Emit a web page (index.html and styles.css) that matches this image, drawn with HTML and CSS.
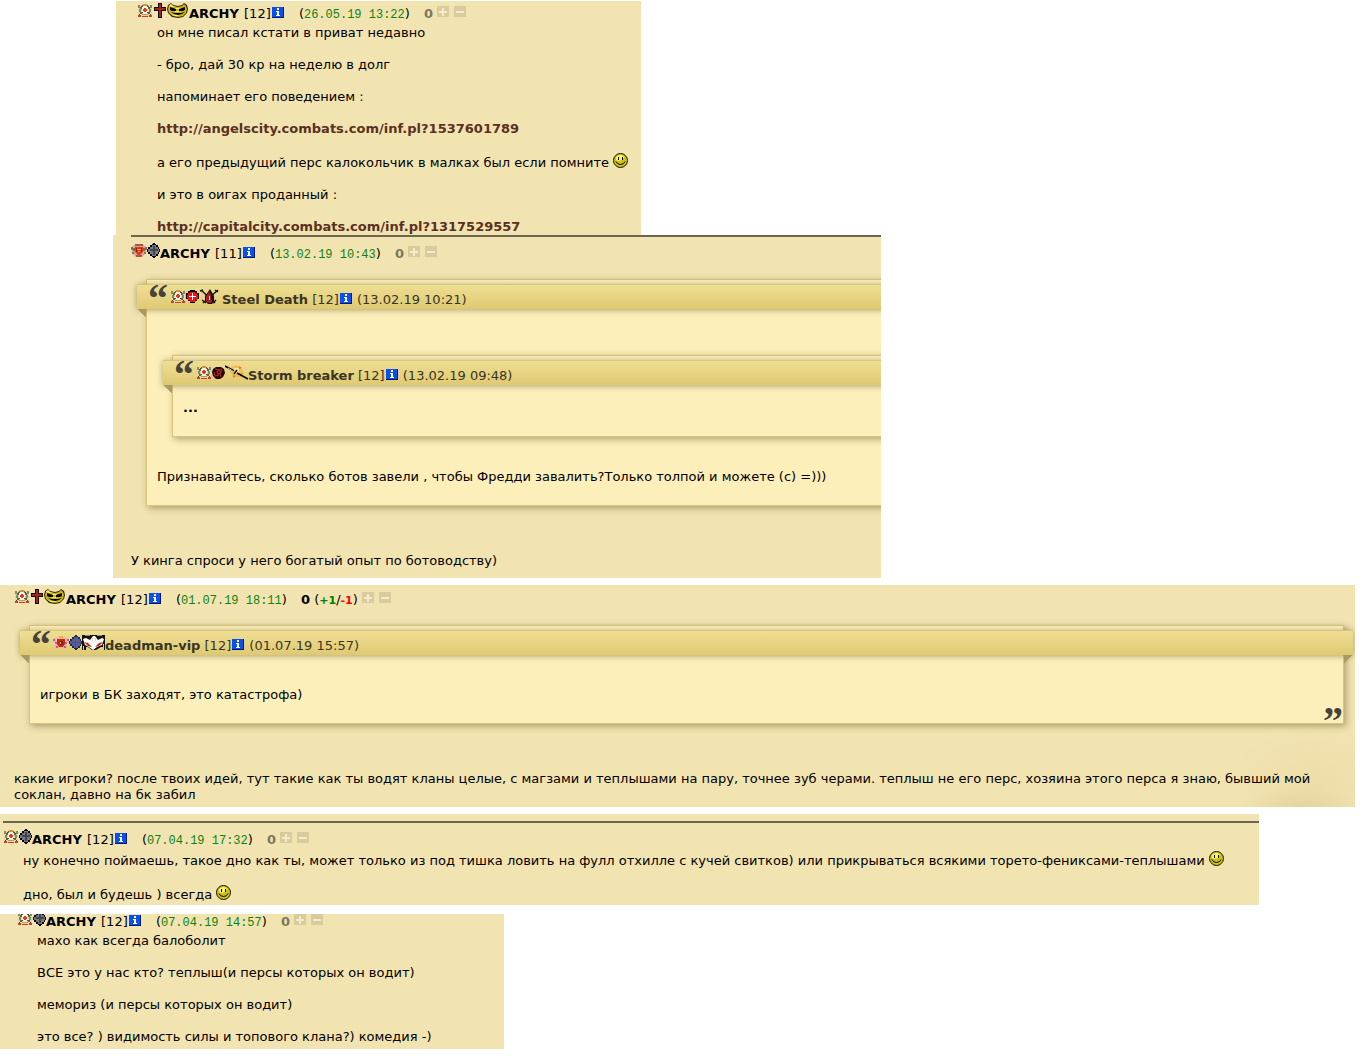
FILE: index.html
```html
<!DOCTYPE html>
<html lang="ru">
<head>
<meta charset="utf-8">
<title>ARCHY</title>
<link rel="stylesheet" href="styles.css">
</head>
<body>

<svg class="sprites" aria-hidden="true">
  <symbol id="crest" viewBox="0 0 16 15">
    <path fill="#e3d5ae" d="M1 2h4V1h6v1h4v12H1z"/>
    <path fill="#7b8f62" d="M1 2h2v3H1zM13 2h2v3h-2zM2 6h2v3H2zM12 6h2v3h-2z"/>
    <path fill="#56693a" d="M3 4h2v2H3zM11 4h2v2h-2zM3 9h2v2H3zM11 9h2v2h-2z"/>
    <path fill="#c79a3c" d="M6 1h4v2H6zM5 11h6v1H5z"/>
    <path fill="#c4402e" d="M5 2h1v2H5zM10 2h1v2h-1zM1 12h3v2H1zM12 12h3v2h-3zM5 13h6v1H5z"/>
    <path fill="#f9f3e4" d="M6 3h4v1h1v5l-2 2H7L5 9V4h1z"/>
    <path fill="#e5371f" d="M7 5h2v1h1v2H9v1H7V8H6V6h1z"/>
    <path fill="#5d4422" d="M4 3h1v1H4zM11 3h1v1h-1zM5 9h1v1H5zM10 9h1v1h-1zM2 11h1v1H2zM13 11h1v1h-1z"/>
  </symbol>
  <symbol id="crest-red" viewBox="0 0 16 15">
    <path fill="#c3ae98" d="M1 4l4-3h6l4 3v6l-4 4H5l-4-4z"/>
    <path fill="#7d7466" d="M0 4h2v3H0zM14 4h2v3h-2zM1 9h2v2H1zM13 9h2v2h-2z"/>
    <path fill="#b5513f" d="M4 1h8v2H4zM2 5h2v3H2zM12 5h2v3h-2zM5 12h6v2H5z"/>
    <path fill="#df3a1e" d="M4 4h8v5l-4 4-4-4z"/>
    <path fill="#f2a23a" d="M6 6h4v1H6zM7 8h2v1H7z"/>
    <path fill="#8b2016" d="M5 5h1v4H5zM10 5h1v4h-1z"/>
  </symbol>
  <symbol id="crest-pink" viewBox="0 0 16 15">
    <path fill="#eab3ae" d="M1 3h3l2-1h4l2 1h3v8l-3 2H4l-3-2z"/>
    <path fill="#c4617a" d="M0 4h2v2H0zM14 4h2v2h-2zM2 7h2v2H2zM12 7h2v2h-2zM3 11h2v2H3zM11 11h2v2h-2z"/>
    <path fill="#fae8df" d="M3 4h1v2H3zM12 4h1v2h-1zM1 8h1v2H1zM14 8h1v2h-1z"/>
    <path fill="#e01c14" d="M4 4h8v5l-2 3H6L4 9z"/>
    <path fill="#5a3214" d="M7 6h3v4H7z"/>
    <path fill="#f0b43c" d="M6 1h4v2H6zM7 7h1v2H7z"/>
  </symbol>
  <symbol id="cross" viewBox="0 0 13 15">
    <path fill="#1c0505" d="M5 0h4v4h4v4H9v7H5V8H1V4h4z"/>
    <path fill="#99281f" d="M6 1h2v4h4v2H8v7H6V7H2V5h4z"/>
  </symbol>
  <symbol id="order-gray" viewBox="0 0 13 15">
    <path fill="#000" d="M5 1h1V0h2v1h1v1h2v2h1v2h1v3h-1v2h-1v2H9v1H8v1H6v-1H5v-1H3v-2H1V9H0V6h1V4h2V2h2z"/>
    <path fill="#777a80" d="M5 2h4v2h2v2h1v3h-1v2H9v2H5v-2H3V9H1V6h2V4h2z"/>
    <path fill="#43464b" d="M6 3h2v3h3v2H8v4H6V8H3V6h3z"/>
  </symbol>
  <symbol id="order-blue" viewBox="0 0 13 15">
    <path fill="#1e2a4c" d="M5 1h1V0h2v1h1v1h2v2h1v2h1v3h-1v2h-1v2H9v1H8v1H6v-1H5v-1H3v-2H1V9H0V6h1V4h2V2h2z"/>
    <path fill="#52619b" d="M5 2h4v2h2v2h1v3h-1v2H9v2H5v-2H3V9H1V6h2V4h2z"/>
    <path fill="#7b3f68" d="M6 2h1v5h5v1H7v5H6V8H1V7h5z"/>
  </symbol>
  <symbol id="order-red" viewBox="0 0 13 15">
    <path fill="#000" d="M4 1h5v1h2v2h2v6h-2v2H9v2H4v-2H2v-2H0V4h2V2h2z"/>
    <path fill="#f01410" d="M4 3h5v1h2v2h1v3h-1v2H9v2H4v-2H2V9H1V6h1V4h2z"/>
    <path fill="#fff" d="M6 4h1v3h3v1H7v3H6V8H3V7h3z"/>
  </symbol>
  <symbol id="order-dark" viewBox="0 0 13 15">
    <path fill="#230504" d="M4 2h5l3 2 1 4-2 4-3 2H4l-3-3-1-4 1-3z"/>
    <path fill="none" stroke="#a8281a" stroke-width="1.2" d="M3 4l4 1 3-1M10 5l-2 4 1 3M7 10l-4 1-1-4M5 7l2-2 2 3-3 1z"/>
  </symbol>
  <symbol id="clan-evil" viewBox="0 0 23 15">
    <path fill="#2b2600" d="M2 2l3-2 2 2 5 1 4-1 2-2 3 2 1 4-1 4-4 4-5 1-6-1-4-4-1-4z"/>
    <path fill="#c9b414" d="M3 2l2-1 2 2 5 1 4-1 2-2 2 2 1 3-1 4-3 3-5 1-5-1-4-3-1-4z"/>
    <path fill="#f6ee66" d="M3 3l2-2 2 2 3 1-4 0zM9 5h4l2 1H9zM9 8h4v1H9zM5 11l4 1h5l-3 1H8z"/>
    <path fill="#000" d="M4 4l6 2v2H6L4 7zM19 4l-6 2v2h4l2-1zM5 9l4 1h6l4-1-3 2-4 1-4-1z"/>
  </symbol>
  <symbol id="clan-blood" viewBox="0 0 23 15">
    <path fill="none" stroke="#111" stroke-width="1.4" d="M2 1l14 13M19 1L4 14M1 2l3-1M16 1l3 2M3 11l4 3M14 14l3-3"/>
    <path fill="#111" d="M9 3l2-3 4 7v5l-2 3H9l-3-3V7z"/>
    <path fill="#a91c26" d="M10 2l3 6v4l-1 2H9l-2-2V8z"/>
    <path fill="#f3dcd8" d="M10 7h1v4h-1z"/>
    <path fill="#111" d="M12 7h2v4h-2z"/>
  </symbol>
  <symbol id="clan-sword" viewBox="0 0 23 15">
    <path fill="#f6bd50" d="M6 2l3-1 2-1 2 1 4 1v3l2 3-2 2-1 3-4-1-4 1-1-4-2-2 2-2z"/>
    <path fill="#e87c2c" d="M6 3l2 1-1 2zM14 1l3 2-3 1zM8 10l3 1-3 2zM15 9l3-1-2 3z"/>
    <path fill="#fce58c" d="M9 3h5v6H9z"/>
    <path stroke="#000" stroke-width="1.6" d="M0 1l9 5M12 8l11 6"/>
    <path stroke="#c9c2b4" d="M3 3l8 5"/>
    <path stroke="#000" stroke-width="1.4" d="M12 5l-3 4"/>
  </symbol>
  <symbol id="clan-mask" viewBox="0 0 23 15">
    <path fill="#16120f" d="M0 0h23v15h-1V9h-1v3h-2l-5 3h-4l-4-3H4v3H2v-4H1v4H0z"/>
    <path fill="#a08a68" d="M3 0h5v1H3zM15 0h5v1h-5z"/>
    <path fill="#fff" d="M1 4l3-1 4 2 3-4h2l3 4 4-2 2 1-2 6-5 2-4 3-4-3-4-2z"/>
    <path fill="#c01c1c" d="M2 7l4 1 4 4-4-1zM21 7l-4 1-4 4 4-1z"/>
    <path fill="#e8d2a0" d="M10 3h1v3h-1zM13 3h1v3h-1z"/>
  </symbol>
  <symbol id="info" viewBox="0 0 12 11">
    <path fill="#00186e" d="M0 0h12v11H0z"/>
    <path fill="#0a50f0" d="M0 0h11v10H0z"/>
    <path fill="#fff" d="M5 1h2v2H5zM4 4h3v4h1v1H4V8h1V5H4z"/>
  </symbol>
  <symbol id="plus" viewBox="0 0 12 11">
    <path fill="#d8cb9d" d="M0 0h12v11H0z"/>
    <path fill="#f5ecc9" d="M5 2h2v3h3v2H7v3H5V7H2V5h3z"/>
  </symbol>
  <symbol id="minus" viewBox="0 0 12 11">
    <path fill="#d8cb9d" d="M0 0h12v11H0z"/>
    <path fill="#f5ecc9" d="M2 5h8v2H2z"/>
  </symbol>
  <symbol id="smile" viewBox="0 0 15 15">
    <circle cx="7.500" cy="7.500" r="7" fill="#d2c010" stroke="#111"/>
    <path fill="#f8f26a" d="M3 4l3-2h3l2 2-2 3-4 1-2-1z"/>
    <path fill="#000" d="M5 4h1v3H5zM9 4h1v3H9z"/>
    <path fill="none" stroke="#000" d="M3 8.500Q4 11.500 7.500 11.500T12 8.500"/>
  </symbol>
</svg>

<div class="post first">
  <div class="head">
    <svg class="crest"><use href="#crest"/></svg><svg class="order"><use href="#cross"/></svg><svg class="clan"><use href="#clan-evil"/></svg><b class="name">ARCHY</b> [12]<a href="#" class="info" aria-label="info"><svg><use href="#info"/></svg></a>
    <span class="date">(<tt>26.05.19 13:22</tt>)</span>
    <b class="score">0</b>
    <button class="vote" aria-label="+"><svg><use href="#plus"/></svg></button><button class="vote" aria-label="-"><svg><use href="#minus"/></svg></button>
  </div>
  <div class="text">
    <p>он мне писал кстати в приват недавно</p>
    <p>- бро, дай 30 кр на неделю в долг</p>
    <p>напоминает его поведением :</p>
    <p><a href="http://angelscity.combats.com/inf.pl?1537601789">http://angelscity.combats.com/inf.pl?1537601789</a></p>
    <p>а его предыдущий перс калокольчик в малках был если помните <svg class="smile"><use href="#smile"/></svg></p>
    <p>и это в оигах проданный :</p>
    <p><a href="http://capitalcity.combats.com/inf.pl?1317529557">http://capitalcity.combats.com/inf.pl?1317529557</a></p>
  </div>
</div>

<div class="post second">
  <hr>
  <div class="head">
    <svg class="crest"><use href="#crest-red"/></svg><svg class="order"><use href="#order-gray"/></svg><b class="name">ARCHY</b> [11]<a href="#" class="info" aria-label="info"><svg><use href="#info"/></svg></a>
    <span class="date">(<tt>13.02.19 10:43</tt>)</span>
    <b class="score">0</b>
    <button class="vote" aria-label="+"><svg><use href="#plus"/></svg></button><button class="vote" aria-label="-"><svg><use href="#minus"/></svg></button>
  </div>
  <div class="quote cut">
    <div class="band">
      <svg class="crest"><use href="#crest"/></svg><svg class="order"><use href="#order-red"/></svg><svg class="clan"><use href="#clan-blood"/></svg><b>Steel Death</b> [12]<a href="#" class="info" aria-label="info"><svg><use href="#info"/></svg></a> (13.02.19 10:21)
    </div>
    <div class="quote cut inner">
      <div class="band">
        <svg class="crest"><use href="#crest"/></svg><svg class="order"><use href="#order-dark"/></svg><svg class="clan"><use href="#clan-sword"/></svg><b>Storm breaker</b> [12]<a href="#" class="info" aria-label="info"><svg><use href="#info"/></svg></a> (13.02.19 09:48)
      </div>
      <p class="dots">...</p>
    </div>
    <p>Признавайтесь, сколько ботов завели , чтобы Фредди завалить?Только толпой и можете (с) =)))</p>
  </div>
  <p class="reply">У кинга спроси у него богатый опыт по ботоводству)</p>
</div>

<div class="post third">
  <div class="head">
    <svg class="crest"><use href="#crest"/></svg><svg class="order"><use href="#cross"/></svg><svg class="clan"><use href="#clan-evil"/></svg><b class="name">ARCHY</b> [12]<a href="#" class="info" aria-label="info"><svg><use href="#info"/></svg></a>
    <span class="date">(<tt>01.07.19 18:11</tt>)</span>
    <b class="score voted">0</b> (<b class="up">+1</b>/<b class="down">-1</b>)
    <button class="vote" aria-label="+"><svg><use href="#plus"/></svg></button><button class="vote" aria-label="-"><svg><use href="#minus"/></svg></button>
  </div>
  <div class="quote full">
    <div class="band">
      <svg class="crest"><use href="#crest-pink"/></svg><svg class="order"><use href="#order-blue"/></svg><svg class="clan"><use href="#clan-mask"/></svg><b>deadman-vip</b> [12]<a href="#" class="info" aria-label="info"><svg><use href="#info"/></svg></a> (01.07.19 15:57)
    </div>
    <p>игроки в БК заходят, это катастрофа)</p>
  </div>
  <p class="reply">какие игроки? после твоих идей, тут такие как ты водят кланы целые, с магзами и теплышами на пару, точнее зуб черами. теплыш не его перс, хозяина этого перса я знаю, бывший мой соклан, давно на бк забил</p>
</div>

<div class="post fourth">
  <hr>
  <div class="head">
    <svg class="crest"><use href="#crest"/></svg><svg class="order"><use href="#order-gray"/></svg><b class="name">ARCHY</b> [12]<a href="#" class="info" aria-label="info"><svg><use href="#info"/></svg></a>
    <span class="date">(<tt>07.04.19 17:32</tt>)</span>
    <b class="score">0</b>
    <button class="vote" aria-label="+"><svg><use href="#plus"/></svg></button><button class="vote" aria-label="-"><svg><use href="#minus"/></svg></button>
  </div>
  <div class="text">
    <p>ну конечно поймаешь, такое дно как ты, может только из под тишка ловить на фулл отхилле с кучей свитков) или прикрываться всякими торето-фениксами-теплышами <svg class="smile"><use href="#smile"/></svg></p>
    <p>дно, был и будешь ) всегда <svg class="smile"><use href="#smile"/></svg></p>
  </div>
</div>

<div class="post fifth">
  <div class="head">
    <svg class="crest"><use href="#crest"/></svg><svg class="order"><use href="#order-gray"/></svg><b class="name">ARCHY</b> [12]<a href="#" class="info" aria-label="info"><svg><use href="#info"/></svg></a>
    <span class="date">(<tt>07.04.19 14:57</tt>)</span>
    <b class="score">0</b>
    <button class="vote" aria-label="+"><svg><use href="#plus"/></svg></button><button class="vote" aria-label="-"><svg><use href="#minus"/></svg></button>
  </div>
  <div class="text">
    <p>махо как всегда балоболит</p>
    <p>ВСЕ это у нас кто? теплыш(и персы которых он водит)</p>
    <p>мемориз (и персы которых он водит)</p>
    <p>это все? ) видимость силы и топового клана?) комедия -)</p>
  </div>
</div>

</body>
</html>
```
FILE: styles.css
```css
body {
    margin: 0;
    padding-top: 1px;
    background: #fff;
    color: #000;
    font: 13px/16px Verdana, "DejaVu Sans", sans-serif;
}
p {
    margin: 0;
}
.sprites {
    display: none;
}

/* posts */
.post {
    overflow: hidden;
    background: #f2e4b1;
}
.first {
    max-width: 504px;
    margin-left: 116px;
    padding: 2px 0 0 21px;
}
.second {
    max-width: 750px;
    margin-left: 113px;
    padding: 0 0 9px 18px;
}
.third {
    margin: 7px 11px 0 0;
    padding: 4px 0 4px 14px;
    background: radial-gradient(ellipse 60px 20px at 96% 100%, #e4d5a0, rgba(228, 213, 160, 0)),
        radial-gradient(ellipse 90px 60px at 97% 90%, #ecdda8, rgba(236, 221, 168, 0)), #f2e4b1;
}
.fourth {
    max-width: 1256px;
    margin-top: 7px;
    padding: 7px 0 2px 3px;
}
.fifth {
    max-width: 487px;
    margin-top: 9px;
    padding: 0 0 4px 17px;
}
.fifth .head {
    margin-top: -3px;
}
hr {
    height: 2px;
    margin: 0 0 6px;
    border: 0;
    background: #6a6650;
}

/* post header */
.head {
    margin-bottom: 3px;
}
.name {
    margin-right: 1px;
}
.crest, .order, .clan {
    height: 15px;
}
.crest {
    width: 16px;
}
.order {
    width: 13px;
}
.clan {
    width: 23px;
}
.info {
    margin: 0 1px;
}
.info svg, .vote svg {
    width: 12px;
    height: 11px;
}
.vote {
    width: 12px;
    height: 11px;
    margin: 0 5px 0 0;
    padding: 0;
    border: 0;
    background: none;
    font: inherit;
    line-height: 11px;
    vertical-align: 1px;
    cursor: pointer;
}
.vote svg {
    display: block;
}
.date {
    margin-left: 10px;
}
.date tt {
    font: 12px "Liberation Mono", monospace;
    line-height: 12px;
    color: #118011;
}
.score {
    margin-left: 10px;
    color: #7d7762;
}
.score.voted {
    color: #000;
}
.up, .down {
    font-size: 11px;
    line-height: 11px;
    color: #008000;
}
.down {
    color: #f00;
}

/* post text */
.text {
    margin-left: 20px;
}
.text p + p {
    margin-top: 16px;
}
.text a {
    color: #5b3021;
    font-weight: bold;
    text-decoration: none;
}
.smile {
    width: 15px;
    height: 15px;
    vertical-align: -1px;
}
.reply {
    margin-top: 47px;
}

/* quotes */
.quote {
    position: relative;
    margin: 17px 15px 0;
    padding: 4px 10px 20px;
    border: 1px solid #d7c57c;
    background: #fcefba;
    box-shadow: 2px 2px 7px rgba(80, 65, 15, .45);
}
.quote.cut {
    margin-right: -30px;
}
.quote.full {
    margin-right: 11px;
}
.quote.inner {
    margin-top: 46px;
}
.quote p {
    margin-top: 32px;
}
.quote .dots {
    margin-top: 15px;
    font-weight: bold;
}
.band {
    position: relative;
    margin: 0 -20px;
    padding: 4px 0 1px 33px;
    border-top: 1px solid #d7c57c;
    background: linear-gradient(#efde93, #dfca72);
    box-shadow: 0 1px 6px rgba(80, 65, 15, .45);
    color: #3a3424;
}
.band::before, .full::after {
    position: absolute;
    top: -5px;
    left: 11px;
    content: "\201C";
    color: #45423a;
    font: bold 40px/38px "Liberation Serif", serif;
}
.full::after {
    top: auto;
    bottom: -17px;
    right: 0;
    left: auto;
    content: "\201D";
}
/* folded corner under the band */
.band::after, .full .band::after {
    position: absolute;
    top: 100%;
    left: 0;
    right: 0;
    height: 8px;
    content: "";
    background: linear-gradient(to top right, rgba(0, 0, 0, 0) 50%, #a89961 50%) 0 0 / 9px 8px no-repeat;
}
.full .band::after {
    background: linear-gradient(to top right, rgba(0, 0, 0, 0) 50%, #a89961 50%) 0 0 / 9px 8px no-repeat,
        linear-gradient(to top left, rgba(0, 0, 0, 0) 50%, #a89961 50%) 100% 0 / 9px 8px no-repeat;
}
```
